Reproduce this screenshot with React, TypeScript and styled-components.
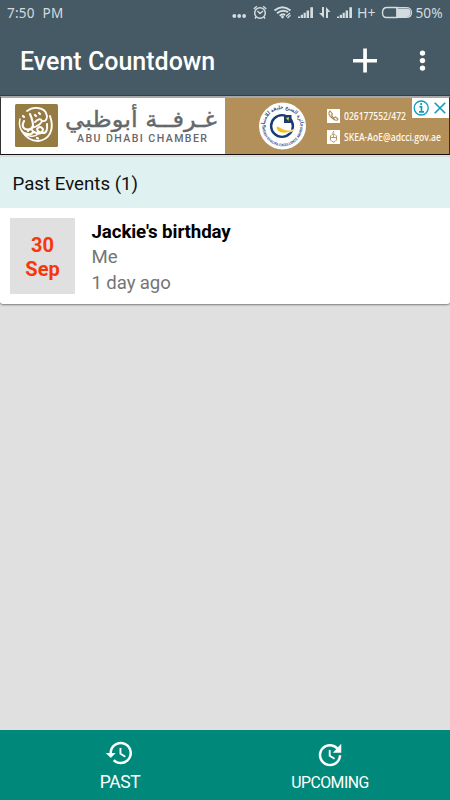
import React from 'react';
import styled, { createGlobalStyle } from 'styled-components';

const Global = createGlobalStyle`
  * { box-sizing: border-box; }
  body { margin: 0; background: #e0e0e0; font-family: Roboto, sans-serif; }
  svg { display: block; flex: none; }
`;
const Screen = styled.div`
  width: 450px; height: 800px; display: flex; flex-direction: column;
  background: #e0e0e0; overflow: hidden;
`;
const StatusBar = styled.div`
  height: 27px; flex: none; background: #455a64; display: flex; align-items: center;
  justify-content: space-between; padding-left: 7px; color: #d5dcdf;
`;
const Clock = styled.span`
  font: 13.5px/27px 'Noto Sans', sans-serif; letter-spacing: .25px; word-spacing: 4px;
`;
const AppBar = styled.header`
  height: 69px; flex: none; background: #455a64; border-bottom: 1px solid #174a5a;
  display: flex; align-items: center; padding: 0 20px; color: #fff;
`;
const Title = styled.h1`
  margin: 0; flex: 1; font-size: 25px; line-height: 68px; font-weight: 500; padding-top: 2px;
`;
const Ad = styled.section`
  height: 59px; flex: none; display: flex; background: #fff;
  border: 1px solid #333; border-top: 2px solid #a6a8aa; border-bottom: 1px solid #111;
`;
const Chamber = styled.div`
  width: 224px; flex: none; display: flex; padding: 6px 0 0 14px; gap: 7px;
`;
const Award = styled.div`
  flex: 1; display: flex; background: #b38f59; padding-left: 33px; position: relative;
`;
const Contacts = styled.div`
  display: flex; flex-direction: column; gap: 5px; padding: 10px 0 0 20px;
`;
const Contact = styled.div`height: 16px; display: flex; align-items: center; gap: 3px;`;
const AdChoices = styled.div`
  position: absolute; right: 0; top: 0; width: 37px; height: 20px; background: #fff;
`;
const Card = styled.main`
  height: 147px; margin-top: 2px; flex: none; background: #fff; border-radius: 3px; overflow: hidden;
  box-shadow: 0 1px 2px rgba(0,0,0,.45);
`;
const SectionTitle = styled.h2`
  margin: 0; height: 51px; background: #dff1f0; color: #111; font-size: 18.7px;
  font-weight: 400; line-height: 54px; padding-left: 12.5px;
`;
const EventRow = styled.div`display: flex; padding: 10px 10px 0; gap: 16.5px;`;
const DateTile = styled.div`
  width: 65px; height: 76px; background: #e0e0e0; color: #f4370c; text-align: center;
  font-size: 20px; font-weight: 700; line-height: 24px; padding-top: 15px;
`;
const Details = styled.div`font-size: 18.6px; line-height: 25.5px; color: #757575; padding-top: 1px; letter-spacing: -.1px;`;
const EventName = styled.div`font-size: 18.7px; font-weight: 700; color: #000; padding-top: .5px;`;
const Nav = styled.nav`
  margin-top: auto; height: 70px; flex: none; display: flex; background: #00897b; padding: 0 15px; color: #fff;
`;
const Tab = styled.div<{ $top: string; $size: string }>`
  flex: 1; display: flex; flex-direction: column; align-items: center; padding-top: ${p => p.$top};
  font-size: ${p => p.$size};
`;
const TabLabel = styled.span<{ $gap: string; $track: string }>`
  line-height: 20px; margin-top: ${p => p.$gap}; letter-spacing: ${p => p.$track};
`;

const StatusIcons = () => (
  <svg width="225" height="27" viewBox="0 0 225 27" fill="none" stroke="#d5dcdf">
    <g fill="#d5dcdf" stroke="none">
      <circle cx="9.3" cy="16" r="1.9" /><circle cx="14.2" cy="16" r="1.9" /><circle cx="19.1" cy="16" r="1.9" />
      <path d="M73 18v-1.5h2.2V18zM75.8 18v-3.2H78V18zM78.6 18v-5.2h2.2V18zM81.6 18v-7.5H84V18zM85.3 18V7.2H88V18zM112 18v-1.5h2.2V18zM114.8 18v-3.2h2.2V18zM117.6 18v-5.2h2.2V18zM120.6 18v-7.5h2.4V18zM124.3 18V7.2h2.7V18z" />
      <path d="M97 7h2v11l-5-5h3zM101 18V7l4.5 5H103v6zM172 8.5h10q3.5 0 3.5 4t-3.5 4.5h-10z" />
    </g>
    <circle cx="35" cy="13" r="5.3" strokeWidth="1.5" />
    <path d="M32.5 11l2.5 2.5 3-2.5M28.8 9l3-2.7M38.2 6.3L41.2 9M31 17l-1 1.5M39 17l1 1.5" strokeWidth="1.4" />
    <path d="M49.5 10.5Q57.5 4 65.5 10.5M52 13.2Q57.5 8.8 63 12.2M54.7 15.7q2.7-2.2 5.5-.9" strokeWidth="2" />
    <circle cx="57.5" cy="17" r="1.4" fill="#d5dcdf" stroke="none" />
    <path d="M61 16.5l4-3.5M62.5 18l3-2.8" strokeWidth="1.3" />
    <path d="M172 7.5h-10q-4.5 0-4.5 5.2t4.5 4.8h10z" strokeWidth="1.4" />
    <path d="M172 7.5h9q5.5 0 5.5 5t-5.5 5h-9z" strokeWidth="1.2" />
    <g fill="#d5dcdf" stroke="none" fontFamily="Noto Sans, sans-serif" fontSize="13.5">
      <text x="132" y="18" textLength="18.5" lengthAdjust="spacingAndGlyphs">H+</text>
      <text x="190.5" y="18" textLength="27" lengthAdjust="spacingAndGlyphs">50%</text>
    </g>
  </svg>
);
const HeaderIcons = () => (
  <svg width="82" height="44" viewBox="348 38.5 82 44" fill="#fff">
    <path d="M353 58.4h10.2V48h3.7v10.4H377v3.5h-10.1V72h-3.7V61.9H353z" />
    <circle cx="422.5" cy="52.6" r="2.7" /><circle cx="422.5" cy="60.1" r="2.7" /><circle cx="422.5" cy="67.6" r="2.7" />
  </svg>
);
const ChamberEmblem = () => (
  <svg width="43" height="43" viewBox="0 0 43 43">
    <rect width="43" height="43" rx="1.5" fill="#967b43" />
    <g fill="none" stroke="#fff" strokeLinecap="round" strokeLinejoin="round">
      <path d="M5 15C3 23 7 31 15 32Q20 33 23 30" strokeWidth="1.5" />
      <path d="M7 27Q13 37 23 37C34 36 40 26 35 12" strokeWidth="1.9" />
      <path d="M9 17Q6 23 10 25Q16 27 18 22Q18 17 15 10" strokeWidth="2.1" />
      <path d="M17 24Q26 21 27 17Q25 13 20 18M27 17Q32 18 32 12Q31 5 23 4Q17 3 12 7" strokeWidth="1.8" />
      <path d="M9 29Q18 32 18 27Q15 23 13 27M19 28Q27 32 28 25Q25 21 22 25Q22 28 28 29Q33 29 32 20" strokeWidth="2" />
      <path d="M8 12l1 1M20 11l1 1M24 9l1 1M22 34l1 .5" strokeWidth="2.2" />
    </g>
  </svg>
);
const ChamberName = () => (
  <svg width="155" height="44" viewBox="0 0 155 44" fill="#66686a">
    <text x="152" y="22.5" direction="rtl" textAnchor="start" stroke="#66686a" strokeWidth=".4" fontFamily="DejaVu Sans, sans-serif" fontSize="22.5" textLength="152" lengthAdjust="spacingAndGlyphs">غـرفــة أبوظبي</text>
    <text x="12" y="38.2" fontFamily="Roboto, sans-serif" fontSize="10.6" fontWeight="500" textLength="130">ABU DHABI CHAMBER</text>
  </svg>
);
const AwardSeal = () => (
  <svg width="49" height="55" viewBox="0 0 49 55">
    <defs>
      <path id="upper" d="M6.5 29a18 18 0 1 1 36 0" />
      <path id="lower" d="M4.2 28a20.2 20.2 0 0 0 40.4 0" />
    </defs>
    <circle cx="24.5" cy="28" r="23.5" fill="#fff" />
    <g fill="#36548c">
      <text fontFamily="DejaVu Sans, sans-serif" fontSize="5.5" fontWeight="700"><textPath href="#upper" textLength="56" lengthAdjust="spacingAndGlyphs">جائزة الشيخ خليفة للامتياز</textPath></text>
      <text fontFamily="Roboto, sans-serif" fontSize="3.6" fontWeight="700"><textPath href="#lower" textLength="62" lengthAdjust="spacingAndGlyphs">SHEIKH KHALIFA EXCELLENCE AWARD</textPath></text>
    </g>
    <circle cx="24" cy="28" r="10.9" fill="none" stroke="#173b76" strokeWidth="2.4" />
    <path d="M26 17h7.5v8H26z" fill="#173b76" /><path d="M28 20l3-1-.5 4z" fill="#f4c92f" />
    <path d="M18 28Q19 41 42 30Q31 34 25 31Q20 28 18 28z" fill="#f2bf21" stroke="#fff" strokeWidth=".7" />
  </svg>
);
const PhoneIcon = () => (
  <svg width="13" height="14" viewBox="0 0 13 14">
    <path fill="#fff" d="M0 0h13v14H0z" />
    <path d="M3 2q-3 3 2 7t6 1l-2.5-2-1.5 1q-2-1-2.5-3L5.5 5z" fill="none" stroke="#b38f59" strokeWidth="1.1" />
  </svg>
);
const MouseIcon = () => (
  <svg width="13" height="14" viewBox="0 0 13 14">
    <path fill="#fff" d="M0 0h13v14H0z" />
    <path d="M6 4V2l1-1M3.5 6q3-4 6 0v4q-3 4-6 0zM3.5 7.5h6M6.5 4.5v3" fill="none" stroke="#b38f59" strokeWidth=".9" />
  </svg>
);
const ContactText = ({ text, width }: { text: string; width: number }) => (
  <svg width="102" height="16" viewBox="0 0 102 16" fill="#fff8ed">
    <text x="1" y="12" fontFamily="Open Sans, sans-serif" fontSize="10" fontWeight="600" textLength={width} lengthAdjust="spacingAndGlyphs">{text}</text>
  </svg>
);
const AdChoicesIcons = () => (
  <svg width="37" height="20" viewBox="0 0 37 20" fill="none" stroke="#109bbd">
    <circle cx="9.2" cy="10" r="7" strokeWidth="1.3" />
    <path d="M7.5 8.9h2v5M7 13.9h5M22.7 4.7l10.5 10.5M33.2 4.7L22.7 15.2" strokeWidth="1.6" />
    <circle cx="9.2" cy="6.1" r="1.1" fill="#109bbd" stroke="none" />
  </svg>
);

export default function App() {
  return (
    <Screen>
      <Global />
      <StatusBar><Clock>7:50 PM</Clock><StatusIcons /></StatusBar>
      <AppBar><Title>Event Countdown</Title><HeaderIcons /></AppBar>
      <Ad>
        <Chamber><ChamberEmblem /><ChamberName /></Chamber>
        <Award>
          <AwardSeal />
          <Contacts>
            <Contact><PhoneIcon /><ContactText text="026177552/472" width={62} /></Contact>
            <Contact><MouseIcon /><ContactText text="SKEA-AoE@adcci.gov.ae" width={97} /></Contact>
          </Contacts>
          <AdChoices><AdChoicesIcons /></AdChoices>
        </Award>
      </Ad>
      <Card>
        <SectionTitle>Past Events (1)</SectionTitle>
        <EventRow>
          <DateTile>30<br />Sep</DateTile>
          <Details><EventName>Jackie's birthday</EventName><div>Me</div><div>1 day ago</div></Details>
        </EventRow>
      </Card>
      <Nav>
        <Tab $top="8px" $size="17.5px">
          <svg width="30" height="30" viewBox="0.4 0 24 24" fill="#fff"><path d="M13 3c-4.97 0-9 4.03-9 9H1l3.89 3.89.07.14L9 12H6c0-3.87 3.13-7 7-7s7 3.13 7 7-3.13 7-7 7c-1.93 0-3.68-.79-4.94-2.06l-1.42 1.42C8.27 19.99 10.51 21 13 21c4.97 0 9-4.03 9-9s-4.03-9-9-9zm-1 5v5l4.28 2.54.72-1.21-3.5-2.08V8H12z" /></svg>
          <TabLabel $gap="4px" $track="-.35px">PAST</TabLabel>
        </Tab>
        <Tab $top="10px" $size="15.8px">
          <svg width="30" height="30" viewBox="0 0 24 24" fill="#fff"><path d="M21 10.12h-6.78l2.74-2.82c-2.73-2.7-7.15-2.8-9.88-.1-2.73 2.71-2.73 7.08 0 9.79s7.15 2.71 9.88 0C18.32 15.65 19 14.08 19 12.1h2c0 1.98-.88 4.55-2.64 6.29-3.51 3.48-9.21 3.48-12.72 0-3.5-3.47-3.53-9.11-.02-12.58s9.14-3.47 12.65 0L21 3v7.12zM12.5 8v4.25l3.5 2.08-.72 1.21L11 13V8h1.5z" /></svg>
          <TabLabel $gap="3px" $track="-.5px">UPCOMING</TabLabel>
        </Tab>
      </Nav>
    </Screen>
  );
}
